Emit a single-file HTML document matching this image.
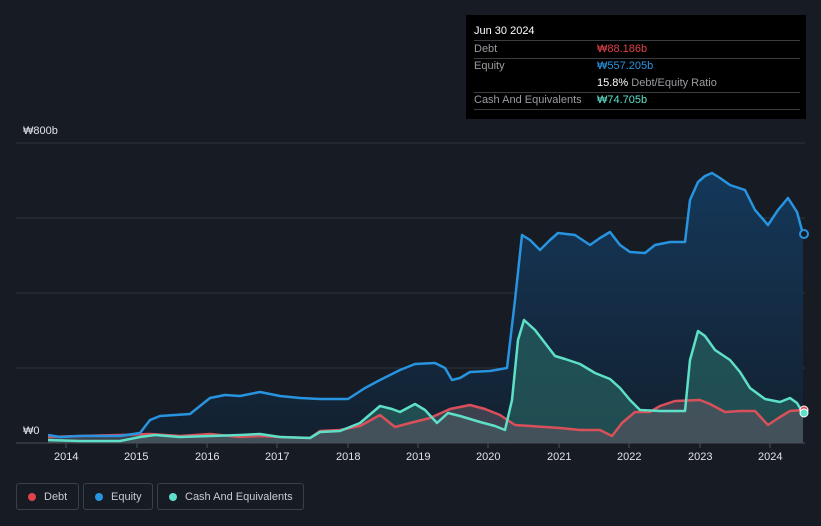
<!DOCTYPE html>
<html><head><style>
body{margin:0;background:#161b24;width:821px;height:526px;overflow:hidden;font-family:"Liberation Sans",sans-serif;position:relative}
.tt{position:absolute;left:466px;top:15px;width:340px;height:104px;background:#000;color:#fff;font-size:11px}
.tt .r{position:absolute;left:8px;right:6px;height:17px;line-height:17px;border-bottom:1px solid #3a3d42}
.tt .l{color:#9a9ca0;position:absolute;left:0}
.tt .v{position:absolute;left:123px}
.lg{position:absolute;top:483px;height:27px;border:1px solid #3b4048;border-radius:3px;color:#c8cbd0;font-size:11px;line-height:27px;box-sizing:border-box}
.lg i{position:absolute;left:11px;top:9px;width:8px;height:8px;border-radius:50%}
.lg span{position:absolute;left:27px}
.ax{position:absolute;color:#e0e2e6;font-size:11px}
</style></head><body>
<svg width="821" height="526" style="position:absolute;left:0;top:0">
<defs><linearGradient id="eq" x1="0" y1="0" x2="0" y2="1"><stop offset="0" stop-color="#14385a"/><stop offset="1" stop-color="#13202f"/></linearGradient></defs>
<g stroke="#2f343b" stroke-width="1"><line x1="16" y1="143" x2="805" y2="143"/><line x1="16" y1="218" x2="805" y2="218"/><line x1="16" y1="293" x2="805" y2="293"/><line x1="16" y1="368" x2="805" y2="368"/></g>
<path fill="url(#eq)" d="M48,435 L60,437 L80,436 L120,436 L140,433 L150,420 L160,416 L175,415 L190,414 L200,406 L210,398 L225,395 L240,396 L260,392 L280,396 L300,398 L320,399 L348,399 L365,388 L380,380 L400,370 L415,364 L435,363 L445,368 L452,380 L460,378 L470,372 L490,371 L507,368 L515,300 L522,235 L530,240 L540,250 L550,240 L558,233 L575,235 L590,245 L600,238 L610,232 L620,245 L630,252 L645,253 L655,245 L670,242 L685,242 L690,200 L698,182 L705,176 L712,173 L720,178 L730,185 L745,190 L755,210 L768,225 L778,210 L788,198 L797,212 L803,234 L803,443 L48,443Z"/>
<path fill="#2a6a66" fill-opacity="0.6" d="M48,440 L80,441 L120,441 L140,437 L155,435 L180,437 L210,436 L240,435 L260,434 L280,437 L310,438 L320,432 L340,431 L360,423 L380,406 L392,409 L400,412 L415,404 L425,410 L437,423 L448,413 L460,416 L480,422 L495,426 L505,430 L512,400 L518,340 L524,320 L535,330 L545,343 L555,356 L565,359 L580,364 L595,373 L610,379 L620,388 L630,400 L640,410 L660,411 L685,411 L690,360 L698,331 L705,336 L715,350 L730,360 L740,372 L750,388 L765,399 L780,402 L790,398 L797,403 L803,413 L803,443 L48,443Z"/>
<path fill="#5a5560" fill-opacity="0.6" d="M48,437 L80,436 L120,435 L150,434 L180,436 L210,434 L240,437 L260,436 L280,437 L310,438 L320,431 L340,430 L360,426 L380,415 L395,427 L410,423 L430,418 L450,409 L470,405 L485,409 L500,415 L515,425 L530,426 L560,428 L580,430 L600,430 L612,436 L622,423 L635,412 L650,412 L660,406 L675,401 L700,400 L710,404 L725,412 L740,411 L755,411 L768,425 L780,417 L790,411 L803,410 L803,443 L48,443Z"/>
<line x1="16" y1="443" x2="805" y2="443" stroke="#4a4f57"/>
<g fill="none" stroke-width="2.5" stroke-linejoin="round">
<path stroke="#d9505a" d="M48,437 L80,436 L120,435 L150,434 L180,436 L210,434 L240,437 L260,436 L280,437 L310,438 L320,431 L340,430 L360,426 L380,415 L395,427 L410,423 L430,418 L450,409 L470,405 L485,409 L500,415 L515,425 L530,426 L560,428 L580,430 L600,430 L612,436 L622,423 L635,412 L650,412 L660,406 L675,401 L700,400 L710,404 L725,412 L740,411 L755,411 L768,425 L780,417 L790,411 L803,410"/>
<path stroke="#2894e0" d="M48,435 L60,437 L80,436 L120,436 L140,433 L150,420 L160,416 L175,415 L190,414 L200,406 L210,398 L225,395 L240,396 L260,392 L280,396 L300,398 L320,399 L348,399 L365,388 L380,380 L400,370 L415,364 L435,363 L445,368 L452,380 L460,378 L470,372 L490,371 L507,368 L515,300 L522,235 L530,240 L540,250 L550,240 L558,233 L575,235 L590,245 L600,238 L610,232 L620,245 L630,252 L645,253 L655,245 L670,242 L685,242 L690,200 L698,182 L705,176 L712,173 L720,178 L730,185 L745,190 L755,210 L768,225 L778,210 L788,198 L797,212 L803,234"/>
<path stroke="#5ee0c8" d="M48,440 L80,441 L120,441 L140,437 L155,435 L180,437 L210,436 L240,435 L260,434 L280,437 L310,438 L320,432 L340,431 L360,423 L380,406 L392,409 L400,412 L415,404 L425,410 L437,423 L448,413 L460,416 L480,422 L495,426 L505,430 L512,400 L518,340 L524,320 L535,330 L545,343 L555,356 L565,359 L580,364 L595,373 L610,379 L620,388 L630,400 L640,410 L660,411 L685,411 L690,360 L698,331 L705,336 L715,350 L730,360 L740,372 L750,388 L765,399 L780,402 L790,398 L797,403 L803,413"/>
</g>
<circle cx="804" cy="234" r="4" fill="#161b24" stroke="#2894e0" stroke-width="2"/>
<circle cx="804" cy="410" r="4" fill="#d9505a" stroke="#fff" stroke-width="1"/>
<circle cx="804" cy="413" r="4" fill="#5ee0c8" stroke="#fff" stroke-width="1"/>
<g stroke="#4a4f57"><line x1="66" y1="443" x2="66" y2="448"/><line x1="137" y1="443" x2="137" y2="448"/><line x1="207" y1="443" x2="207" y2="448"/><line x1="277" y1="443" x2="277" y2="448"/><line x1="348" y1="443" x2="348" y2="448"/><line x1="418" y1="443" x2="418" y2="448"/><line x1="488" y1="443" x2="488" y2="448"/><line x1="559" y1="443" x2="559" y2="448"/><line x1="629" y1="443" x2="629" y2="448"/><line x1="700" y1="443" x2="700" y2="448"/><line x1="770" y1="443" x2="770" y2="448"/></g>
</svg>
<div class="ax" style="left:23px;top:125px">₩800b</div>
<div class="ax" style="left:23px;top:425px">₩0</div>
<div class="ax" style="left:54px;top:451px">2014</div>
<div class="ax" style="left:124px;top:451px">2015</div>
<div class="ax" style="left:195px;top:451px">2016</div>
<div class="ax" style="left:265px;top:451px">2017</div>
<div class="ax" style="left:336px;top:451px">2018</div>
<div class="ax" style="left:406px;top:451px">2019</div>
<div class="ax" style="left:476px;top:451px">2020</div>
<div class="ax" style="left:547px;top:451px">2021</div>
<div class="ax" style="left:617px;top:451px">2022</div>
<div class="ax" style="left:688px;top:451px">2023</div>
<div class="ax" style="left:758px;top:451px">2024</div>
<div class="tt">
<div class="r" style="top:8px">Jun 30 2024</div>
<div class="r" style="top:26px"><span class="l">Debt</span><span class="v" style="color:#e0434b">₩88.186b</span></div>
<div class="r" style="top:43px;border:none"><span class="l">Equity</span><span class="v" style="color:#2894e0">₩557.205b</span></div>
<div class="r" style="top:60px"><span class="v"><b style="font-weight:normal;color:#fff">15.8%</b> <span style="color:#9a9ca0">Debt/Equity Ratio</span></span></div>
<div class="r" style="top:77px"><span class="l">Cash And Equivalents</span><span class="v" style="color:#5ee0c8">₩74.705b</span></div>
</div>
<div class="lg" style="left:16px;width:63px"><i style="background:#e0434b"></i><span>Debt</span></div>
<div class="lg" style="left:83px;width:70px"><i style="background:#2894e0"></i><span>Equity</span></div>
<div class="lg" style="left:157px;width:147px"><i style="background:#5ee0c8"></i><span>Cash And Equivalents</span></div>
</body></html>
